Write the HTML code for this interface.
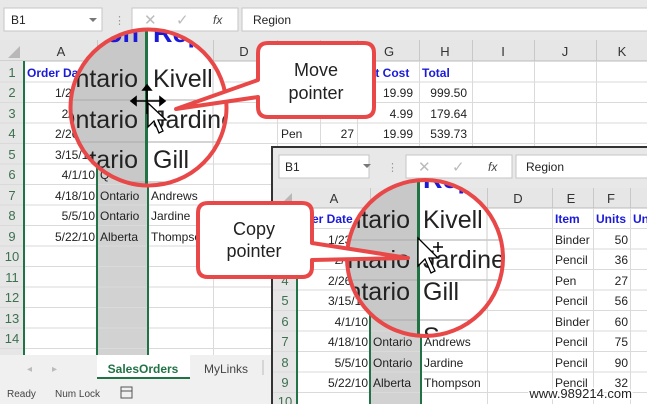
<!DOCTYPE html>
<html><head><meta charset="utf-8"><style>
html,body{margin:0;padding:0;width:647px;height:404px;overflow:hidden;background:#fff}
svg{display:block}
text{font-family:"Liberation Sans",sans-serif}
</style></head><body>
<svg width="647" height="404" viewBox="0 0 647 404" xmlns="http://www.w3.org/2000/svg">
<defs>
<clipPath id="c1"><circle cx="148.5" cy="107.5" r="78"/></clipPath>
<clipPath id="c2"><circle cx="425" cy="258" r="78"/></clipPath>
<clipPath id="w2"><rect x="272" y="147" width="375" height="257"/></clipPath>
</defs>

<rect x="0" y="0" width="647" height="404" fill="#fff"/>
<rect x="0" y="0" width="647" height="40" fill="#e8e8e8"/>
<rect x="4" y="8" width="98" height="23" fill="#fff" stroke="#c6c6c6"/>
<text x="11" y="24" font-size="12" fill="#222">B1</text>
<path d="M89 18 l4 4 l4 -4z" fill="#777"/>
<text x="114" y="24" font-size="11" fill="#999">⋮</text>
<rect x="132" y="8" width="106" height="23" fill="#fff" stroke="#c6c6c6"/>
<text x="144" y="25" font-size="15" fill="#bbb">✕</text>
<text x="176" y="25" font-size="15" fill="#bbb">✓</text>
<text x="213" y="24" font-size="12" font-style="italic" font-family="Liberation Serif" fill="#444">fx</text>
<rect x="242" y="8" width="410" height="23" fill="#fff" stroke="#c6c6c6"/>
<text x="253" y="24" font-size="12" fill="#222">Region</text>

<rect x="0" y="40" width="647" height="21" fill="#e6e6e6"/>
<path d="M8 58 L20 58 L20 46 Z" fill="#b8b8b8"/>
<g stroke="#c8c8c8" stroke-width="1">
<line x1="97.5" y1="40" x2="97.5" y2="61"/><line x1="147.5" y1="40" x2="147.5" y2="61"/><line x1="213.5" y1="40" x2="213.5" y2="61"/>
<line x1="277.5" y1="40" x2="277.5" y2="61"/><line x1="320.5" y1="40" x2="320.5" y2="61"/><line x1="357.5" y1="40" x2="357.5" y2="61"/>
<line x1="419.5" y1="40" x2="419.5" y2="61"/><line x1="472.5" y1="40" x2="472.5" y2="61"/><line x1="534.5" y1="40" x2="534.5" y2="61"/><line x1="596.5" y1="40" x2="596.5" y2="61"/>
</g>
<line x1="0" y1="61" x2="647" y2="61" stroke="#bbb"/>
<g font-size="13" fill="#333" text-anchor="middle">
<text x="61" y="56">A</text><text x="244" y="56">D</text><text x="389" y="56">G</text><text x="445" y="56">H</text><text x="503" y="56">I</text><text x="565" y="56">J</text><text x="622" y="56">K</text>
</g>
<rect x="0" y="61" width="24" height="294" fill="#e6e6e6"/>
<rect x="97" y="61" width="50" height="294" fill="#d2d2d2"/>
<g stroke="#dadada">
<line x1="0" y1="82" x2="647" y2="82"/><line x1="0" y1="102.5" x2="647" y2="102.5"/><line x1="0" y1="123" x2="647" y2="123"/>
<line x1="0" y1="143.5" x2="647" y2="143.5"/><line x1="0" y1="164" x2="647" y2="164"/><line x1="0" y1="184.5" x2="647" y2="184.5"/>
<line x1="0" y1="205" x2="647" y2="205"/><line x1="0" y1="225.5" x2="647" y2="225.5"/><line x1="0" y1="246" x2="647" y2="246"/>
<line x1="0" y1="266.5" x2="647" y2="266.5"/><line x1="0" y1="287" x2="647" y2="287"/><line x1="0" y1="307.5" x2="647" y2="307.5"/>
<line x1="0" y1="328" x2="647" y2="328"/><line x1="0" y1="348.5" x2="647" y2="348.5"/>
<line x1="213.5" y1="61" x2="213.5" y2="355"/><line x1="277.5" y1="61" x2="277.5" y2="355"/><line x1="320.5" y1="61" x2="320.5" y2="355"/>
<line x1="357.5" y1="61" x2="357.5" y2="355"/><line x1="419.5" y1="61" x2="419.5" y2="355"/><line x1="472.5" y1="61" x2="472.5" y2="355"/>
<line x1="534.5" y1="61" x2="534.5" y2="355"/><line x1="596.5" y1="61" x2="596.5" y2="355"/>
</g>
<g stroke="#217346" stroke-width="2">
<line x1="24" y1="61" x2="24" y2="355"/><line x1="97" y1="61" x2="97" y2="355"/><line x1="148" y1="61" x2="148" y2="355"/>
</g>
<g font-size="13" fill="#3d7050" text-anchor="middle">
<text x="12" y="77">1</text><text x="12" y="97">2</text><text x="12" y="118">3</text><text x="12" y="138">4</text><text x="12" y="159">5</text>
<text x="12" y="179">6</text><text x="12" y="200">7</text><text x="12" y="220">8</text><text x="12" y="241">9</text><text x="12" y="261">10</text>
<text x="12" y="282">11</text><text x="12" y="302">12</text><text x="12" y="323">13</text><text x="12" y="343">14</text>
</g>
<g font-size="12" fill="#222">
<text x="27" y="77" fill="#1a1ad8" font-weight="bold">Order Date</text>
<g text-anchor="end"><text x="95" y="97">1/23/10</text><text x="95" y="118">2/9/10</text><text x="95" y="138">2/26/10</text><text x="95" y="159">3/15/10</text>
<text x="95" y="179">4/1/10</text><text x="95" y="200">4/18/10</text><text x="95" y="220">5/5/10</text><text x="95" y="241">5/22/10</text></g>
<text x="100" y="179">Q</text><text x="100" y="200">Ontario</text><text x="100" y="220">Ontario</text><text x="100" y="241">Alberta</text>
<text x="151" y="200">Andrews</text><text x="151" y="220">Jardine</text><text x="151" y="241">Thompson</text>
<text x="281" y="138">Pen</text><text x="354" y="138" text-anchor="end">27</text>
<text x="372" y="77" fill="#1a1ad8" font-weight="bold">it Cost</text><text x="422" y="77" fill="#1a1ad8" font-weight="bold">Total</text>
<g text-anchor="end"><text x="413" y="97">19.99</text><text x="413" y="118">4.99</text><text x="413" y="138">19.99</text>
<text x="467" y="97">999.50</text><text x="467" y="118">179.64</text><text x="467" y="138">539.73</text></g>
</g>
<rect x="0" y="355" width="272" height="25" fill="#f0f0f0"/>
<text x="27" y="372" font-size="10" fill="#bbb">◂</text><text x="52" y="372" font-size="10" fill="#bbb">▸</text>
<rect x="97" y="355" width="93" height="24" fill="#fff"/>
<line x1="97" y1="378" x2="190" y2="378" stroke="#217346" stroke-width="2"/>
<text x="143" y="373" font-size="12" font-weight="bold" fill="#217346" text-anchor="middle">SalesOrders</text>
<text x="226" y="373" font-size="12" fill="#444" text-anchor="middle">MyLinks</text>
<line x1="263" y1="360" x2="263" y2="375" stroke="#bbb"/>
<rect x="0" y="380" width="272" height="24" fill="#f0f0f0"/>
<text x="7" y="397" font-size="10" fill="#444">Ready</text>
<text x="55" y="397" font-size="10" fill="#444">Num Lock</text>
<rect x="121" y="387" width="11" height="11" fill="none" stroke="#555"/><line x1="121" y1="391" x2="132" y2="391" stroke="#555"/>

<g clip-path="url(#c1)">
<rect x="60" y="25" width="180" height="170" fill="#fff"/>
<rect x="60" y="25" width="86" height="170" fill="#c8c8c8"/>
<g stroke="#aaa"><line x1="60" y1="100" x2="240" y2="100"/><line x1="60" y1="142" x2="240" y2="142"/><line x1="60" y1="182" x2="240" y2="182"/></g>
<line x1="213" y1="25" x2="213" y2="195" stroke="#ccc"/>
<rect x="145" y="25" width="3" height="170" fill="#217346"/>
<g font-size="25" fill="#222">
<text x="138" y="87" text-anchor="end">Ontario</text><text x="138" y="128" text-anchor="end">Ontario</text><text x="138" y="168" text-anchor="end">Ontario</text>
<text x="153" y="87">Kivell</text><text x="153" y="128">Jardine</text><text x="153" y="168">Gill</text>
</g>
<g font-size="27" fill="#1a1ad8" font-weight="bold"><text x="139" y="42" text-anchor="end">on</text><text x="153" y="42">Rep</text></g>
</g>
<circle cx="148.5" cy="107.5" r="78" fill="none" stroke="#e84848" stroke-width="4"/>
<g stroke="#000" stroke-width="1.6" fill="#000">
<line x1="134" y1="101" x2="162" y2="101"/><line x1="147" y1="88" x2="147" y2="114"/>
<path d="M131 101 l5 -4 v8z M165 101 l-5 -4 v8z M147 85 l-4 5 h8z"/>
</g>
<path d="M148 103 L148 127 L154 121 L159 133 L163 131 L158 120 L166 120 Z" fill="#fff" stroke="#000" stroke-width="1.3"/>

<path d="M268 43 H364 Q374 43 374 53 V107 Q374 117 364 117 H268 Q258 117 258 107 V97 L176 109 L258 80 V53 Q258 43 268 43 Z" fill="#fff" stroke="#e84848" stroke-width="4" stroke-linejoin="round"/>
<text x="316" y="76" font-size="18" fill="#222" text-anchor="middle">Move</text>
<text x="316" y="99" font-size="18" fill="#222" text-anchor="middle">pointer</text>

<g clip-path="url(#w2)">
<rect x="272" y="147" width="375" height="257" fill="#fff"/>
<rect x="272" y="147" width="375" height="41" fill="#e8e8e8"/>
<rect x="279" y="155" width="90" height="23" fill="#fff" stroke="#c6c6c6"/>
<text x="285" y="171" font-size="12" fill="#222">B1</text>
<path d="M363 164 l4 4 l4 -4z" fill="#777"/>
<text x="387" y="171" font-size="11" fill="#999">⋮</text>
<rect x="406" y="155" width="106" height="23" fill="#fff" stroke="#c6c6c6"/>
<text x="418" y="172" font-size="15" fill="#bbb">✕</text>
<text x="452" y="172" font-size="15" fill="#bbb">✓</text>
<text x="488" y="171" font-size="12" font-style="italic" font-family="Liberation Serif" fill="#444">fx</text>
<rect x="516" y="155" width="140" height="23" fill="#fff" stroke="#c6c6c6"/>
<text x="526" y="171" font-size="12" fill="#222">Region</text>

<rect x="272" y="188" width="375" height="20" fill="#e6e6e6"/>
<path d="M280 205 L292 205 L292 193 Z" fill="#b8b8b8"/>
<g stroke="#c8c8c8"><line x1="370.5" y1="188" x2="370.5" y2="208"/><line x1="420.5" y1="188" x2="420.5" y2="208"/><line x1="487.5" y1="188" x2="487.5" y2="208"/>
<line x1="552.5" y1="188" x2="552.5" y2="208"/><line x1="593.5" y1="188" x2="593.5" y2="208"/><line x1="630.5" y1="188" x2="630.5" y2="208"/></g>
<line x1="272" y1="208" x2="647" y2="208" stroke="#bbb"/>
<g font-size="13" fill="#333" text-anchor="middle"><text x="334" y="203">A</text><text x="518" y="203">D</text><text x="571" y="203">E</text><text x="611" y="203">F</text></g>
<rect x="272" y="208" width="25" height="196" fill="#e6e6e6"/>
<rect x="370" y="208" width="50" height="196" fill="#d2d2d2"/>
<g stroke="#dadada">
<line x1="272" y1="228.5" x2="647" y2="228.5"/><line x1="272" y1="249" x2="647" y2="249"/><line x1="272" y1="269.5" x2="647" y2="269.5"/>
<line x1="272" y1="290" x2="647" y2="290"/><line x1="272" y1="310.5" x2="647" y2="310.5"/><line x1="272" y1="331" x2="647" y2="331"/>
<line x1="272" y1="351.5" x2="647" y2="351.5"/><line x1="272" y1="372" x2="647" y2="372"/><line x1="272" y1="392.5" x2="647" y2="392.5"/>
<line x1="487.5" y1="208" x2="487.5" y2="404"/><line x1="552.5" y1="208" x2="552.5" y2="404"/><line x1="593.5" y1="208" x2="593.5" y2="404"/><line x1="630.5" y1="208" x2="630.5" y2="404"/>
</g>
<g stroke="#217346" stroke-width="2"><line x1="297" y1="208" x2="297" y2="404"/><line x1="370" y1="208" x2="370" y2="404"/><line x1="421" y1="208" x2="421" y2="404"/></g>
<g font-size="13" fill="#3d7050" text-anchor="middle">
<text x="285" y="223">1</text><text x="285" y="244">2</text><text x="285" y="264">3</text><text x="285" y="285">4</text><text x="285" y="305">5</text>
<text x="285" y="326">6</text><text x="285" y="346">7</text><text x="285" y="367">8</text><text x="285" y="387">9</text><text x="285" y="406">10</text>
</g>
<g font-size="12" fill="#222">
<text x="300" y="223" fill="#1a1ad8" font-weight="bold">rder Date</text>
<g text-anchor="end"><text x="368" y="244">1/23/10</text><text x="368" y="264">2/9/10</text><text x="368" y="285">2/26/10</text><text x="368" y="305">3/15/10</text>
<text x="368" y="326">4/1/10</text><text x="368" y="346">4/18/10</text><text x="368" y="367">5/5/10</text><text x="368" y="387">5/22/10</text></g>
<text x="373" y="346">Ontario</text><text x="373" y="367">Ontario</text><text x="373" y="387">Alberta</text>
<text x="424" y="346">Andrews</text><text x="424" y="367">Jardine</text><text x="424" y="387">Thompson</text>
<text x="555" y="223" fill="#1a1ad8" font-weight="bold">Item</text><text x="596" y="223" fill="#1a1ad8" font-weight="bold">Units</text><text x="633" y="223" fill="#1a1ad8" font-weight="bold">Un</text>
<text x="555" y="244">Binder</text><text x="555" y="264">Pencil</text><text x="555" y="285">Pen</text><text x="555" y="305">Pencil</text>
<text x="555" y="326">Binder</text><text x="555" y="346">Pencil</text><text x="555" y="367">Pencil</text><text x="555" y="387">Pencil</text>
<g text-anchor="end"><text x="628" y="244">50</text><text x="628" y="264">36</text><text x="628" y="285">27</text><text x="628" y="305">56</text>
<text x="628" y="326">60</text><text x="628" y="346">75</text><text x="628" y="367">90</text><text x="628" y="387">32</text></g>
</g>
</g>
<rect x="272" y="147" width="376" height="258" fill="none" stroke="#333" stroke-width="2"/>

<g clip-path="url(#c2)">
<rect x="340" y="175" width="170" height="170" fill="#fff"/>
<rect x="340" y="175" width="78" height="170" fill="#c8c8c8"/>
<g stroke="#aaa"><line x1="340" y1="240" x2="510" y2="240"/><line x1="340" y1="280" x2="510" y2="280"/><line x1="340" y1="320" x2="510" y2="320"/></g>
<line x1="487" y1="175" x2="487" y2="345" stroke="#ccc"/>
<rect x="417" y="175" width="3" height="170" fill="#217346"/>
<g font-size="25" fill="#222">
<text x="410" y="228" text-anchor="end">Ontario</text><text x="410" y="268" text-anchor="end">Ontario</text><text x="410" y="300" text-anchor="end">Ontario</text>
<text x="423" y="228">Kivell</text><text x="423" y="268">Jardine</text><text x="423" y="300">Gill</text><text x="423" y="345">S</text>
</g>
<g font-size="27" fill="#1a1ad8" font-weight="bold"><text x="423" y="188">Rep</text></g>
</g>
<circle cx="425" cy="258" r="78" fill="none" stroke="#e84848" stroke-width="4"/>
<path d="M418 238 L418 266 L425 259 L431 273 L435 271 L429 258 L438 258 Z" fill="#fff" stroke="#000" stroke-width="1.3"/>
<g stroke="#000" stroke-width="1.5"><line x1="438" y1="242" x2="438" y2="252"/><line x1="433" y1="247" x2="443" y2="247"/></g>

<path d="M208 203 H302 Q312 203 312 213 V243 L408 258 L312 260 V267 Q312 277 302 277 H208 Q198 277 198 267 V213 Q198 203 208 203 Z" fill="#fff" stroke="#e84848" stroke-width="4" stroke-linejoin="round"/>
<text x="254" y="235" font-size="18" fill="#222" text-anchor="middle">Copy</text>
<text x="254" y="257" font-size="18" fill="#222" text-anchor="middle">pointer</text>

<text x="632" y="398" font-size="13" fill="#222" text-anchor="end" stroke="#fff" stroke-width="3" paint-order="stroke">www.989214.com</text>
</svg>
</body></html>
